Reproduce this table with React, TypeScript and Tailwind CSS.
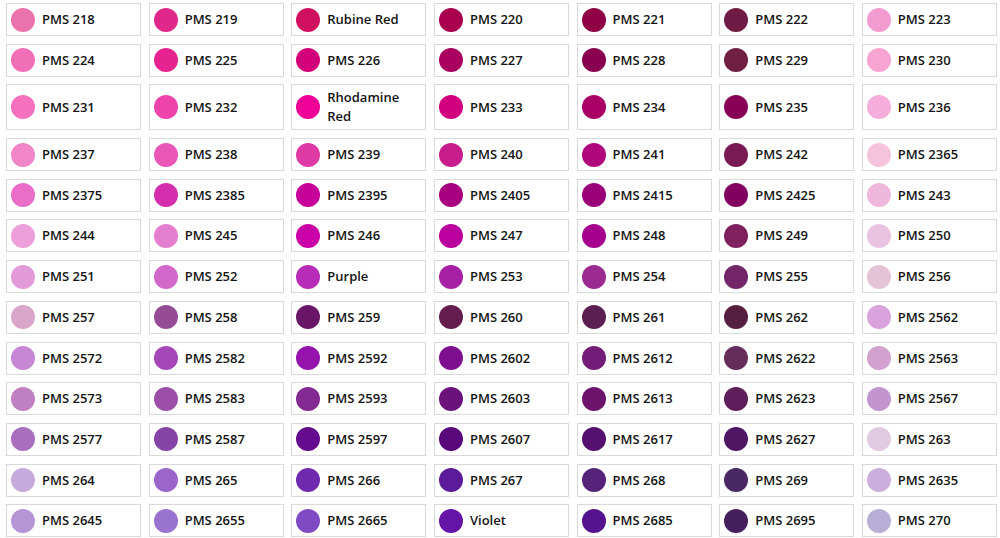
import React from 'react';

type Swatch = { name: string; hex: string };

// colour chips, row by row (7 per row)
const swatches: Swatch[] = [
  { name: 'PMS 218', hex: '#ea73ad' },
  { name: 'PMS 219', hex: '#e0288a' },
  { name: 'Rubine Red', hex: '#d0105f' },
  { name: 'PMS 220', hex: '#a8004f' },
  { name: 'PMS 221', hex: '#8f0046' },
  { name: 'PMS 222', hex: '#6e1b45' },
  { name: 'PMS 223', hex: '#f19bd0' },

  { name: 'PMS 224', hex: '#f06fb7' },
  { name: 'PMS 225', hex: '#e6238f' },
  { name: 'PMS 226', hex: '#d3007a' },
  { name: 'PMS 227', hex: '#aa0060' },
  { name: 'PMS 228', hex: '#8a0050' },
  { name: 'PMS 229', hex: '#6e1f42' },
  { name: 'PMS 230', hex: '#f7a4d3' },

  { name: 'PMS 231', hex: '#f570bd' },
  { name: 'PMS 232', hex: '#ee43aa' },
  { name: 'Rhodamine Red', hex: '#ef0097' },
  { name: 'PMS 233', hex: '#d0007e' },
  { name: 'PMS 234', hex: '#aa0066' },
  { name: 'PMS 235', hex: '#880055' },
  { name: 'PMS 236', hex: '#f5aedb' },

  { name: 'PMS 237', hex: '#f086c8' },
  { name: 'PMS 238', hex: '#e957b7' },
  { name: 'PMS 239', hex: '#e03aa7' },
  { name: 'PMS 240', hex: '#c81e8c' },
  { name: 'PMS 241', hex: '#b0087c' },
  { name: 'PMS 242', hex: '#7a1a55' },
  { name: 'PMS 2365', hex: '#f6c3dc' },

  { name: 'PMS 2375', hex: '#ea6ec8' },
  { name: 'PMS 2385', hex: '#d52eac' },
  { name: 'PMS 2395', hex: '#c8009a' },
  { name: 'PMS 2405', hex: '#a8007f' },
  { name: 'PMS 2415', hex: '#9a0078' },
  { name: 'PMS 2425', hex: '#82005f' },
  { name: 'PMS 243', hex: '#f0b7dd' },

  { name: 'PMS 244', hex: '#ec9fd9' },
  { name: 'PMS 245', hex: '#e47fcf' },
  { name: 'PMS 246', hex: '#cc00a8' },
  { name: 'PMS 247', hex: '#b9009e' },
  { name: 'PMS 248', hex: '#a4008d' },
  { name: 'PMS 249', hex: '#80205f' },
  { name: 'PMS 250', hex: '#eac3e1' },

  { name: 'PMS 251', hex: '#e39ad9' },
  { name: 'PMS 252', hex: '#d368cb' },
  { name: 'Purple', hex: '#b72bb6' },
  { name: 'PMS 253', hex: '#a61fa4' },
  { name: 'PMS 254', hex: '#9b2b91' },
  { name: 'PMS 255', hex: '#722667' },
  { name: 'PMS 256', hex: '#e5c3d6' },

  { name: 'PMS 257', hex: '#d8a6c8' },
  { name: 'PMS 258', hex: '#964c95' },
  { name: 'PMS 259', hex: '#6a1668' },
  { name: 'PMS 260', hex: '#651d50' },
  { name: 'PMS 261', hex: '#5b1f52' },
  { name: 'PMS 262', hex: '#55203f' },
  { name: 'PMS 2562', hex: '#d8a2dd' },

  { name: 'PMS 2572', hex: '#c887d4' },
  { name: 'PMS 2582', hex: '#a647b9' },
  { name: 'PMS 2592', hex: '#9612ac' },
  { name: 'PMS 2602', hex: '#7e1090' },
  { name: 'PMS 2612', hex: '#731c78' },
  { name: 'PMS 2622', hex: '#652c5c' },
  { name: 'PMS 2563', hex: '#d2a1cf' },

  { name: 'PMS 2573', hex: '#c180c2' },
  { name: 'PMS 2583', hex: '#9c4fa8' },
  { name: 'PMS 2593', hex: '#822a92' },
  { name: 'PMS 2603', hex: '#6b137b' },
  { name: 'PMS 2613', hex: '#6c136b' },
  { name: 'PMS 2623', hex: '#5f1d5c' },
  { name: 'PMS 2567', hex: '#c295cf' },

  { name: 'PMS 2577', hex: '#a96fbe' },
  { name: 'PMS 2587', hex: '#8645a6' },
  { name: 'PMS 2597', hex: '#640c8d' },
  { name: 'PMS 2607', hex: '#58087a' },
  { name: 'PMS 2617', hex: '#56106e' },
  { name: 'PMS 2627', hex: '#4f1664' },
  { name: 'PMS 263', hex: '#e2cbe1' },

  { name: 'PMS 264', hex: '#c7aadd' },
  { name: 'PMS 265', hex: '#9b66c9' },
  { name: 'PMS 266', hex: '#6f2ab0' },
  { name: 'PMS 267', hex: '#5b1b9a' },
  { name: 'PMS 268', hex: '#55247a' },
  { name: 'PMS 269', hex: '#4a2863' },
  { name: 'PMS 2635', hex: '#cbaedd' },

  { name: 'PMS 2645', hex: '#b595d6' },
  { name: 'PMS 2655', hex: '#9a72cf' },
  { name: 'PMS 2665', hex: '#7f4bc3' },
  { name: 'Violet', hex: '#6514a8' },
  { name: 'PMS 2685', hex: '#55128e' },
  { name: 'PMS 2695', hex: '#46205e' },
  { name: 'PMS 270', hex: '#b9aed6' },
];

const ColorChip: React.FC<{ swatch: Swatch }> = ({ swatch }) => (
  <div className="flex items-center gap-[7px] min-h-[33px] pl-[4px] pr-[6px] py-[3px] bg-white border border-[#d9d9d9]">
    <span
      className="shrink-0 w-6 h-6 rounded-full"
      style={{ backgroundColor: swatch.hex }}
    />
    <span className="text-[13px] leading-[19px] font-semibold text-[#141414]">{swatch.name}</span>
  </div>
);

export default function App() {
  return (
    <div
      className="w-[1000px] h-[538px] overflow-hidden bg-white pl-[6px] pr-[3px] pt-[3px]"
      style={{ fontFamily: '"Open Sans", "Noto Sans", sans-serif' }}
    >
      <div className="grid grid-cols-7 gap-x-[7.5px] gap-y-[7.7px]">
        {swatches.map((s) => (
          <ColorChip key={s.name} swatch={s} />
        ))}
      </div>
    </div>
  );
}
